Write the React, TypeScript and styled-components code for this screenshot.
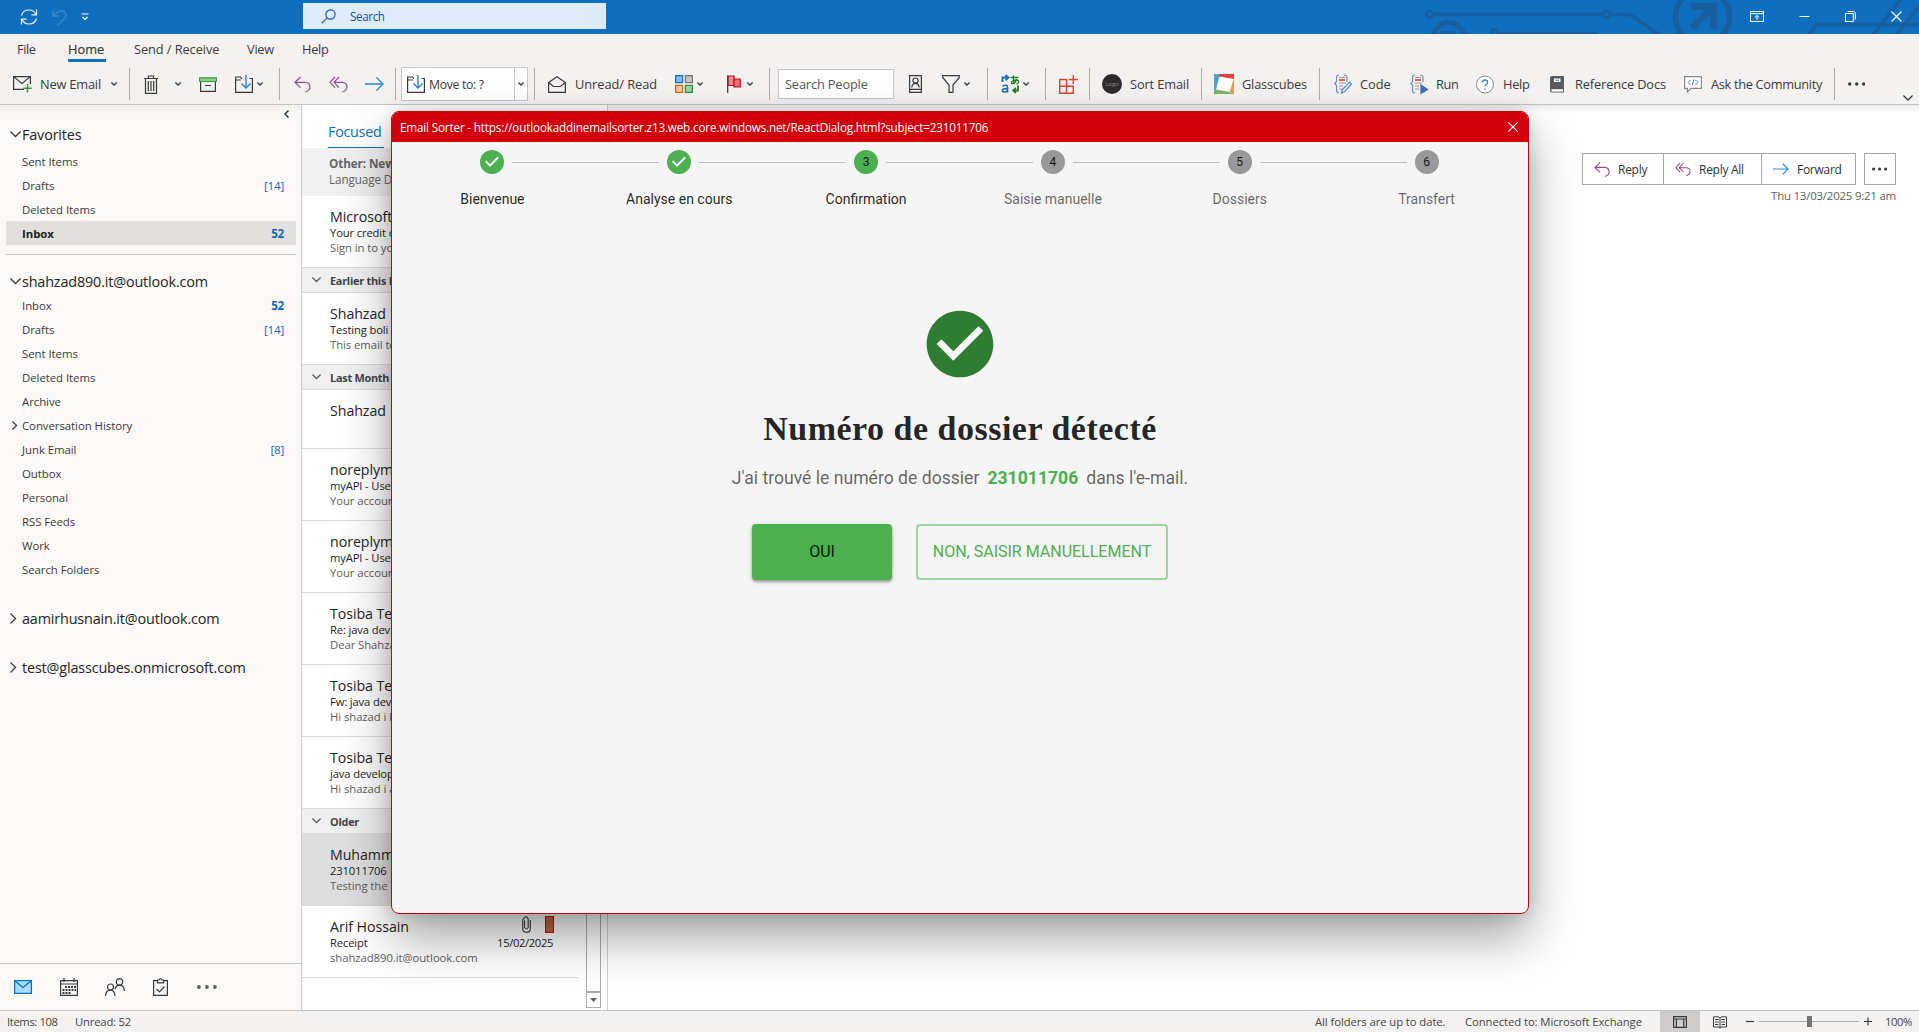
import React from "react";
import styled, { createGlobalStyle, css } from "styled-components";

const GlobalStyle = createGlobalStyle`
  *, *::before, *::after { box-sizing: border-box; }
  html, body { margin: 0; padding: 0; overflow: hidden; }
  body { font-family: "Open Sans", "Noto Sans", sans-serif; color: #444; background: #fff; }
  svg { display: block; flex: none; }
`;

/* ---------- frame ---------- */
const Desktop = styled.div`
  position: relative;
  display: grid;
  grid-template-rows: 34px 71px 1fr 22px;
  width: 1919px;
  height: 1032px;
  overflow: hidden;
  white-space: nowrap;
`;

/* ---------- title bar ---------- */
const TitleBar = styled.header`
  position: relative;
  display: flex;
  align-items: center;
  padding-left: 20px;
  background: #106ebe;
  overflow: hidden;
`;
const Circuit = styled.svg`
  position: absolute;
  right: 0;
  top: 0;
`;
const QuickAccess = styled.div`
  display: flex;
  align-items: center;
  gap: 14px;
  width: 283px;
  height: 34px;
`;
const SearchBox = styled.div`
  display: flex;
  align-items: center;
  width: 303px;
  height: 26px;
  padding-left: 18px;
  gap: 14px;
  margin-bottom: 2px;
  background: #deecf9;
  color: #1f4e8c;
  font-size: 11.7px;
  letter-spacing: -0.4px;
`;
const WindowButtons = styled.div`
  position: relative;
  display: flex;
  align-items: center;
  gap: 35px;
  margin-left: auto;
  padding: 0 17px 2px 0;
`;

/* ---------- ribbon ---------- */
const Ribbon = styled.div`
  display: flex;
  flex-direction: column;
  background: #f3f2f1;
  border-bottom: 1px solid #c6c4c2;
  color: #3b3a39;
`;
const Tabs = styled.nav`
  display: flex;
  gap: 28px;
  height: 28px;
  padding-left: 17px;
`;
const Tab = styled.div<{ $w: number; $active?: boolean; $tight?: number }>`
  width: ${(p) => p.$w}px;
  height: 28px;
  padding-top: 5px;
  line-height: 20px;
  font-size: 12.8px;
  letter-spacing: ${(p) => p.$tight ?? -0.25}px;
  ${(p) =>
    p.$active &&
    css`
      border-bottom: 3px solid #106ebe;
      -webkit-text-stroke: 0.2px;
    `}
`;
const Tools = styled.div`
  display: flex;
  align-items: center;
  height: 42px;
  padding-top: 2px;
`;
const Slot = styled.div<{ $l: number; $w: number }>`
  flex: none;
  display: flex;
  align-items: center;
  margin-left: ${(p) => p.$l}px;
  width: ${(p) => p.$w}px;
`;
const ToolLabel = styled(Slot)<{ $tight?: number }>`
  font-size: 12.8px;
  letter-spacing: ${(p) => p.$tight ?? -0.18}px;
  line-height: 20px;
`;
const Separator = styled.div<{ $l: number }>`
  flex: none;
  width: 1px;
  height: 32px;
  margin-left: ${(p) => p.$l}px;
  background: #aeacaa;
`;
const Combo = styled.div`
  flex: none;
  display: flex;
  align-items: center;
  width: 127px;
  height: 34px;
  margin-left: 5px;
  padding-left: 5px;
  background: #fff;
  border: 1px solid #c8c6c4;
  font-size: 12.3px;
  letter-spacing: -0.35px;
`;
const ComboText = styled.span`
  flex: 1;
  padding-left: 4px;
`;
const ComboDrop = styled.span`
  display: flex;
  align-items: center;
  justify-content: center;
  width: 13px;
  height: 32px;
  border-left: 1px solid #c8c6c4;
`;
const PeopleBox = styled.div`
  flex: none;
  width: 116px;
  height: 30px;
  margin-left: 8px;
  padding-left: 6px;
  line-height: 28px;
  background: #fff;
  border: 1px solid #c8c6c4;
  font-size: 12.8px;
  letter-spacing: -0.15px;
  color: #555;
`;
const LogoDot = styled.div`
  width: 20px;
  height: 20px;
  border-radius: 50%;
  background: #2f2a2a;
  color: #8b8585;
  font-size: 6px;
  line-height: 20px;
  text-align: center;
`;
const Collapse = styled.div`
  align-self: flex-end;
  margin-left: auto;
  padding: 0 6px 3px 0;
`;

/* ---------- folder pane ---------- */
const Body = styled.main`
  display: grid;
  grid-template-columns: 301px 307px 1fr;
  min-height: 0;
  background: #fff;
`;
const FolderPane = styled.aside`
  display: flex;
  flex-direction: column;
  background: linear-gradient(#efeeed, #faf9f8 8px);
`;
const PaneToggle = styled.div`
  display: flex;
  justify-content: flex-end;
  height: 17px;
  padding: 5px 12px 0 0;
`;
const Account = styled.div<{ $top?: number }>`
  display: grid;
  grid-template-columns: 22px 1fr;
  align-items: center;
  height: 24px;
  margin-top: ${(p) => p.$top ?? 0}px;
  font-size: 14.4px;
  letter-spacing: -0.16px;
  color: #252423;
  & svg { margin-left: 10px; }
`;
const Favorites = styled.div`
  padding-top: 3px;
`;
const FolderRow = styled.div<{ $selected?: boolean }>`
  display: grid;
  grid-template-columns: 16px 1fr auto;
  align-items: center;
  height: 24px;
  margin: 0 5px 0 6px;
  padding-right: 12px;
  font-size: 11.4px;
  letter-spacing: -0.05px;
  color: #3b3a39;
  & svg { margin-left: 6px; }
  ${(p) =>
    p.$selected &&
    css`
      background: #e1e0df;
      color: #201f1e;
      font-weight: 700;
    `}
`;
const Count = styled.span<{ $bold?: boolean }>`
  color: #1566b0;
  font-weight: ${(p) => (p.$bold ? 700 : 400)};
  font-size: 11.6px;
  letter-spacing: -0.2px;
`;
const PaneRule = styled.hr`
  width: 290px;
  height: 1px;
  margin: 9px 0 0 6px;
  border: 0;
  background: #cccac8;
`;
const Modules = styled.div`
  display: flex;
  align-items: center;
  height: 47px;
  margin-top: auto;
  border-top: 1px solid #cccac8;
`;

/* ---------- message list ---------- */
const ListPane = styled.section`
  display: grid;
  grid-template-columns: 276px 1fr;
  border-left: 1px solid #cccac8;
  border-right: 1px solid #d0cecc;
`;
const Messages = styled.div`
  display: flex;
  flex-direction: column;
  overflow: hidden;
`;
const FocusTabs = styled.div`
  flex: none;
  height: 43px;
  padding: 16px 0 0 26px;
`;
const FocusTab = styled.div`
  width: 56px;
  height: 27px;
  line-height: 22px;
  border-bottom: 1px solid #106ebe;
  color: #106ebe;
  font-size: 14.4px;
  letter-spacing: -0.3px;
`;
const OtherBand = styled.div`
  flex: none;
  height: 48px;
  padding: 7px 0 0 27px;
  background: #f0f0f0;
  color: #666;
  font-size: 11.7px;
  line-height: 16px;
  letter-spacing: -0.1px;
`;
const Message = styled.article<{ $selected?: boolean; $h?: number }>`
  flex: none;
  display: flex;
  flex-direction: column;
  height: ${(p) => p.$h ?? 72}px;
  padding: 10px 25px 0 28px;
  border-bottom: 1px solid #dcdbda;
  background: ${(p) => (p.$selected ? "#dedede" : "#fff")};
`;
const Line = styled.div`
  display: flex;
  justify-content: space-between;
`;
const Sender = styled(Line)`
  height: 20px;
  line-height: 21px;
  font-size: 14.2px;
  letter-spacing: -0.05px;
  color: #252423;
`;
const Subject = styled(Line)`
  height: 15px;
  line-height: 13px;
  font-size: 11.2px;
  letter-spacing: -0.12px;
  color: #201f1e;
`;
const Preview = styled(Line)`
  height: 15px;
  line-height: 14px;
  font-size: 11.3px;
  letter-spacing: -0.06px;
  color: #605e5c;
`;
const Received = styled.span`
  letter-spacing: -0.35px;
`;
const Markers = styled.span`
  display: flex;
  align-items: center;
  gap: 14px;
  margin: -4px -1px 0 0;
`;
const Flag = styled.i`
  width: 9px;
  height: 17px;
  background: #b9683c;
  border: 1px solid #c00d0d;
`;
const GroupHead = styled.div`
  flex: none;
  display: grid;
  grid-template-columns: 28px 1fr;
  align-items: center;
  height: 25px;
  background: #f0f0f0;
  border-bottom: 1px solid #dcdbda;
  color: #444;
  font-size: 10.9px;
  font-weight: 700;
  letter-spacing: -0.25px;
  & svg { margin-left: 10px; }
`;
const ScrollColumn = styled.div`
  display: flex;
  flex-direction: column;
  align-items: flex-start;
  padding: 9px 0 2px 8px;
`;
const Track = styled.div`
  flex: 1;
  width: 15px;
  border: 1px solid #ababab;
`;
const TrackButton = styled.div`
  display: flex;
  align-items: center;
  justify-content: center;
  width: 15px;
  height: 16px;
  border: 1px solid #ababab;
`;

/* ---------- reading pane ---------- */
const Reading = styled.section`
  display: flex;
  flex-direction: column;
  align-items: flex-end;
  padding: 48px 23px 0 0;
  background: linear-gradient(#ececec, #fff 7px);
`;
const Actions = styled.div`
  display: flex;
  color: #323130;
  font-size: 12px;
  letter-spacing: -0.28px;
`;
const Action = styled.button<{ $w: number; $solo?: boolean }>`
  display: flex;
  align-items: center;
  justify-content: ${(p) => (p.$solo ? "center" : "flex-start")};
  gap: 8px;
  width: ${(p) => p.$w}px;
  height: 32px;
  margin-left: ${(p) => (p.$solo ? 8 : -1)}px;
  padding: 0 0 0 ${(p) => (p.$solo ? 0 : 11)}px;
  border: 1px solid #a9a7a5;
  background: #fff;
  color: inherit;
  font: inherit;
  letter-spacing: inherit;
  & svg { width: 16px; }
`;
const Stamp = styled.time`
  margin-top: 3px;
  line-height: 16px;
  font-size: 11.5px;
  letter-spacing: -0.24px;
  color: #605e5c;
`;

/* ---------- status bar ---------- */
const Status = styled.footer`
  display: flex;
  align-items: center;
  padding: 0 7px;
  background: #f3f2f1;
  border-top: 1px solid #c6c4c2;
  font-size: 11.3px;
  color: #444;
`;
const StatusText = styled.span<{ $l?: number; $w: number; $tight?: number }>`
  width: ${(p) => p.$w}px;
  margin: 0 0 1px ${(p) => p.$l ?? 0}px;
  letter-spacing: ${(p) => p.$tight ?? -0.08}px;
`;
const StatusRight = styled.div`
  display: flex;
  align-items: center;
  margin-left: auto;
`;
const ViewButton = styled.div`
  display: flex;
  align-items: center;
  justify-content: center;
  width: 40px;
  height: 21px;
  margin: 0 13px 0 18px;
  background: #cdcccb;
`;
const Zoom = styled.div`
  display: flex;
  align-items: center;
  gap: 5px;
  margin: 0 13px 0 19px;
`;
const Slider = styled.div`
  display: flex;
  align-items: center;
  justify-content: center;
  width: 100px;
  height: 11px;
  background: linear-gradient(#aeacaa, #aeacaa) center / 100% 1px no-repeat;
`;
const Thumb = styled.i`
  width: 5px;
  height: 11px;
  background: #767472;
`;

/* ---------- add-in dialog ---------- */
const Dialog = styled.div`
  position: absolute;
  left: 391px;
  top: 111px;
  width: 1138px;
  height: 803px;
  border-radius: 8px;
  box-shadow: 0 0 16px rgba(0, 0, 0, 0.14), 0 24px 50px rgba(0, 0, 0, 0.36);
`;
const DialogFrame = styled.div`
  display: flex;
  flex-direction: column;
  height: 803px;
  overflow: hidden;
  border: 1px solid #c4000e;
  border-radius: 8px;
  background: #f5f5f5;
  font-family: Roboto, sans-serif;
`;
const DialogBar = styled.div`
  flex: none;
  display: flex;
  align-items: center;
  justify-content: space-between;
  height: 30px;
  padding: 0 10px 1px 8px;
  background: #d1000c;
  color: #fff;
  font-family: "Open Sans", sans-serif;
  font-size: 11.7px;
  letter-spacing: -0.165px;
`;
const Stepper = styled.ol`
  display: grid;
  grid-template-columns: repeat(6, 1fr);
  margin: 8px 8px 0 7px;
  padding: 0;
  list-style: none;
`;
const Step = styled.li<{ $on: boolean }>`
  display: flex;
  flex-direction: column;
  align-items: center;
  gap: 15px;
  font-size: 14px;
  line-height: 20px;
  color: ${(p) => (p.$on ? "rgba(0,0,0,0.87)" : "rgba(0,0,0,0.6)")};
`;
const StepTop = styled.div`
  display: grid;
  grid-template-columns: 1fr 24px 1fr;
  align-items: center;
  gap: 8px;
  width: 100%;
`;
const Connector = styled.span<{ $hidden: boolean }>`
  height: 1px;
  background: ${(p) => (p.$hidden ? "transparent" : "#bdbdbd")};
`;
const Bullet = styled.span<{ $on: boolean }>`
  display: flex;
  align-items: center;
  justify-content: center;
  width: 24px;
  height: 24px;
  border-radius: 50%;
  background: ${(p) => (p.$on ? "#4caf50" : "#989898")};
  color: rgba(0, 0, 0, 0.87);
  font-size: 12px;
`;
const Result = styled.div`
  display: flex;
  flex-direction: column;
  align-items: center;
  padding-top: 95px;
`;
const Title = styled.h4`
  margin: 24px 0 0;
  font: 700 34px/42px "Liberation Serif", serif;
  letter-spacing: 0.5px;
  color: rgba(0, 0, 0, 0.87);
`;
const Sentence = styled.p`
  display: flex;
  gap: 8px;
  margin: 14px 0 0;
  font-size: 17.6px;
  line-height: 28px;
  color: rgba(0, 0, 0, 0.6);
`;
const FileNumber = styled.strong`
  font-weight: 700;
  color: #4caf50;
`;
const Buttons = styled.div`
  display: flex;
  gap: 24px;
  margin-top: 32px;
`;
const Choice = styled.button<{ $primary?: boolean }>`
  width: ${(p) => (p.$primary ? 140 : 252)}px;
  height: 56px;
  padding: 0 0 2px;
  border-radius: 4px;
  font: 400 16px Roboto, sans-serif;
  ${(p) =>
    p.$primary
      ? css`
          border: 0;
          background: #4caf50;
          color: rgba(0, 0, 0, 0.87);
          box-shadow: 0 2px 3px rgba(0, 0, 0, 0.32), 0 1px 5px rgba(0, 0, 0, 0.12);
        `
      : css`
          border: 2px solid rgba(76, 175, 80, 0.5);
          background: transparent;
          color: #4caf50;
        `}
`;

/* ---------- icons ---------- */
const Svg = ({ w, h, s = "#3b3a39", sw = 1.2, children }: { w: number; h: number; s?: string; sw?: number; children: React.ReactNode }) => (
  <svg width={w} height={h} viewBox={`0 0 ${w} ${h}`} fill="none" stroke={s} strokeWidth={sw} overflow="visible">
    {children}
  </svg>
);
const Chevron = ({ w = 6, c = "#3b3a39", sw = 1.3 }: { w?: number; c?: string; sw?: number }) => (
  <Svg w={w} h={w / 2 + 1} s={c} sw={sw}><path d={`M.4 .5 L${w / 2} ${w / 2} L${w - 0.4} .5`} /></Svg>
);
const ChevronRight = ({ h = 10 }: { h?: number }) => (
  <Svg w={h / 2 + 1} h={h} sw={1.3}><path d={`M.5 .5 L${h / 2} ${h / 2} L.5 ${h - 0.5}`} /></Svg>
);
const ReplyIcon = () => (
  <Svg w={17} h={17} s="#8f4f86"><path d="M6.5 1 L1 6.3 L6.5 11.6 M1 6.3 H11 Q16 6.5 16 11 Q16 14.5 11.5 16" /></Svg>
);
const ReplyAllIcon = () => (
  <Svg w={19} h={17} s="#8f4f86"><path d="M6 1 L1 6.3 L6 11.6 M10 1 L5 6.3 L10 11.6 M5 6.3 H13 Q18 6.5 18 11 Q18 14.5 13.5 16" /></Svg>
);
const ForwardIcon = () => (
  <Svg w={19} h={14} s="#2b88d8" sw={1.3}><path d="M0 7 H18 M11.5 .5 L18 7 L11.5 13.5" /></Svg>
);
const MoveIcon = () => (
  <Svg w={18} h={19}>
    <path d="M7 3.5 H6.5 L5.5 2 H.6 V17.4 H17.4 V3.5 H14.5 M.6 5 H6" />
    <path d="M11 0 V13 M6.5 8.5 L11 13 L15.5 8.5" stroke="#2b7fd0" strokeWidth="1.4" />
  </Svg>
);
const Dots = ({ c = "#3b3a39", r = 1.5, gap = 6 }: { c?: string; r?: number; gap?: number }) => (
  <svg width={gap * 2 + 2 * r} height={4}>
    {[0, 1, 2].map((i) => <circle key={i} cx={r + i * gap} cy={2} r={r} fill={c} />)}
  </svg>
);
const CodePage = ({ children }: { children: React.ReactNode }) => (
  <Svg w={18} h={20} s="#6b8fb5">
    <path d="M5 1 Q2.5 1 2.5 4 V7.5 L.8 9.5 L2.5 11.5 V16 Q2.5 19 5 19 M10 1 Q13 1 13 4 V8" />
    <path d="M5 3.5 H11 M5 9 H12 M5 12 H9 M5 15 H9" stroke="#999" />
    <path d="M5 6 H11" stroke="#e0402f" strokeWidth="1.6" />
    {children}
  </Svg>
);

const STEPS = ["Bienvenue", "Analyse en cours", "Confirmation", "Saisie manuelle", "Dossiers", "Transfert"];
const FAVORITES: [string, string?][] = [["Sent Items"], ["Drafts", "[14]"], ["Deleted Items"], ["Inbox", "52"]];
const FOLDERS: [string, string?][] = [
  ["Inbox", "52"], ["Drafts", "[14]"], ["Sent Items"], ["Deleted Items"], ["Archive"], ["Conversation History"],
  ["Junk Email", "[8]"], ["Outbox"], ["Personal"], ["RSS Feeds"], ["Work"], ["Search Folders"],
];

const Folder = ({ name, count, selected }: { name: string; count?: string; selected?: boolean }) => (
  <FolderRow $selected={selected}>
    <span>{name === "Conversation History" && <ChevronRight h={9} />}</span>
    <span>{name}</span>
    {count && <Count $bold={count === "52"}>{count}</Count>}
  </FolderRow>
);
const Mail = ({ from, subject, preview, selected, h }: { from: string; subject?: string; preview?: string; selected?: boolean; h?: number }) => (
  <Message $selected={selected} $h={h}>
    <Sender>{from}</Sender>
    <Subject>{subject}</Subject>
    <Preview>{preview}</Preview>
  </Message>
);
const Group = ({ name }: { name: string }) => (
  <GroupHead><Chevron w={9} c="#605e5c" /><span>{name}</span></GroupHead>
);

export default function App() {
  return (
    <>
      <GlobalStyle />
      <Desktop>
        <TitleBar>
          <Circuit width="519" height="34" fill="none" stroke="#185f9f" strokeWidth="4">
            <circle cx="29.5" cy="14.5" r="3.5" strokeWidth="2.5" />
            <path d="M33 14.5 H203 M210 14.5 H230 L260 35" strokeWidth="3.5" />
            <circle cx="206.5" cy="14.5" r="3.5" strokeWidth="2.5" />
            <circle cx="48.7" cy="38" r="15.5" strokeWidth="5" />
            <path d="M40 33 H56" />
            <circle cx="95" cy="33" r="3.5" strokeWidth="2.5" />
            <path d="M99 33.5 H198" strokeWidth="3" />
            <circle cx="302.5" cy="17" r="27" strokeWidth="5.5" />
            <path d="M291 6.5 H317 M313.5 3 V29 M314 6 L292 28" strokeWidth="7" />
            <path d="M408 36 L416 24.5 H519 M473 35 L501 -1 M496 35 L522 3" strokeWidth="3.5" />
          </Circuit>
          <QuickAccess>
            <Svg w={18} h={18} s="#e6f1fb" sw={1.2}>
              <path d="M1.5 7.5 Q3 2 9 2 Q14 2 16 6.5 M16.5 1.5 V6.8 H11.5 M16.5 10.5 Q15 16 9 16 Q4 16 2 11.5 M1.5 16.5 V11.2 H6.5" />
            </Svg>
            <Svg w={15} h={17} s="#3c8ad0" sw={1.3}><path d="M1 1 V7 H7 M1 7 Q8 0 12 2.5 Q16 6 12 10 L6 16" /></Svg>
            <Svg w={8} h={8} s="#fff" sw={1.2}><path d="M.5 1 H7.5 M1.5 4 L4 6.5 L6.5 4" /></Svg>
          </QuickAccess>
          <SearchBox>
            <Svg w={15} h={15} s="#1f5a9c"><circle cx="9.5" cy="5.5" r="4.6" /><path d="M6.2 8.8 L.6 14.4" /></Svg>
            <span>Search</span>
          </SearchBox>
          <WindowButtons>
            <Svg w={14} h={11} s="#fff" sw={1}><path d="M.5 .5 H13.5 V10.5 H.5 Z M.5 2.7 H13.5 M7 9 V4.5 M4.8 6.6 L7 4.5 L9.2 6.6" /></Svg>
            <Svg w={11} h={11} s="#fff" sw={1}><path d="M.5 5.5 H10.5" /></Svg>
            <Svg w={11} h={11} s="#fff" sw={1}><path d="M.5 2.5 H8.3 V10.5 H.5 Z M2.5 .5 H8.5 Q10.3 .5 10.3 2.5 V8.5" /></Svg>
            <Svg w={11} h={11} s="#fff" sw={1.1}><path d="M.5 .5 L10.5 10.5 M10.5 .5 L.5 10.5" /></Svg>
          </WindowButtons>
        </TitleBar>

        <Ribbon>
          <Tabs>
            <Tab $w={23} $tight={-0.45}>File</Tab>
            <Tab $w={38} $active $tight={0}>Home</Tab>
            <Tab $w={85} $tight={-0.08}>Send / Receive</Tab>
            <Tab $w={27}>View</Tab>
            <Tab $w={27}>Help</Tab>
          </Tabs>
          <Tools>
            <Slot $l={13} $w={19}>
              <Svg w={19} h={18}>
                <path d="M11 14.4 H.6 V1.6 H17.4 V9 M.6 1.6 L9 8.5 L17.4 1.6" />
                <path d="M14.5 9 V17.5 M10.2 13.2 H18.8" stroke="#389b44" strokeWidth="1.5" />
              </Svg>
            </Slot>
            <ToolLabel $l={8} $w={71}>New Email</ToolLabel>
            <Slot $l={0} $w={18}><Chevron /></Slot>
            <Separator $l={0} />
            <Slot $l={14} $w={14}>
              <Svg w={14} h={19}><path d="M0 3.5 H14 M4.5 3.5 V1 H9.5 V3.5 M1.5 3.5 V18.3 H12.5 V3.5 M4.3 6 V16 M7 6 V16 M9.7 6 V16" /></Svg>
            </Slot>
            <Slot $l={17} $w={6}><Chevron /></Slot>
            <Slot $l={18} $w={18}>
              <Svg w={18} h={15}>
                <path d="M1.6 5 V14.4 H16.4 V5 M6 8.5 H12" />
                <path d="M.6 .8 H17.4 V4.5 H.6 Z" fill="#8fcf95" stroke="#389b44" />
              </Svg>
            </Slot>
            <Slot $l={18} $w={22}><MoveIcon /></Slot>
            <Slot $l={0} $w={22}><Chevron /></Slot>
            <Separator $l={0} />
            <Slot $l={14} $w={17}><ReplyIcon /></Slot>
            <Slot $l={18} $w={19}><ReplyAllIcon /></Slot>
            <Slot $l={17} $w={19}><ForwardIcon /></Slot>
            <Separator $l={11} />
            <Combo>
              <MoveIcon />
              <ComboText>Move to: ?</ComboText>
              <ComboDrop><Chevron /></ComboDrop>
            </Combo>
            <Separator $l={6} />
            <Slot $l={13} $w={18}>
              <Svg w={18} h={17}><path d="M.6 6.5 L9 .7 L17.4 6.5 V16.4 H.6 Z M.6 6.5 L5.5 10.5 H12.5 L17.4 6.5" /></Svg>
            </Slot>
            <ToolLabel $l={9} $w={100} $tight={-0.05}>Unread/ Read</ToolLabel>
            <Slot $l={0} $w={22}>
              <Svg w={18} h={18}>
                <rect x=".6" y=".6" width="7" height="7" fill="#7fb9ec" stroke="#106ebe" />
                <rect x="10.4" y=".6" width="7" height="7" fill="#c8c6c4" stroke="#767472" />
                <rect x=".6" y="10.4" width="7" height="7" fill="#f4c493" stroke="#c26a1c" />
                <rect x="10.4" y="10.4" width="7" height="7" fill="#9bd49f" stroke="#2f8f3b" />
              </Svg>
            </Slot>
            <Slot $l={0} $w={30}><Chevron /></Slot>
            <Slot $l={0} $w={20}>
              <Svg w={14} h={18} s="#c50f1f">
                <path d="M1 1 H7 V10.5 H1 Z" fill="#ee8a92" /><path d="M7 4 H13.3 V12 H7 Z" fill="#e5727c" />
                <path d="M.7 .5 V18" stroke="#3b3a39" />
              </Svg>
            </Slot>
            <Slot $l={0} $w={21}><Chevron /></Slot>
            <Separator $l={1} />
            <PeopleBox>Search People</PeopleBox>
            <Slot $l={15} $w={13}>
              <Svg w={13} h={18}>
                <path d="M.6 .6 H12.4 V17.4 H.6 Z M.6 14.3 H12.4" /><circle cx="6.5" cy="5.6" r="2.6" />
                <path d="M2.8 12.5 Q3.2 8.4 6.5 8.4 Q9.8 8.4 10.2 12.5" />
              </Svg>
            </Slot>
            <Slot $l={20} $w={22}><Svg w={18} h={18}><path d="M.7 .7 H17.3 V2.5 L11 10 V17.4 H7 V10 L.7 2.5 Z" /></Svg></Slot>
            <Slot $l={0} $w={23}><Chevron /></Slot>
            <Separator $l={0} />
            <Slot $l={13} $w={22}>
              <Svg w={19} h={18} s="#106ebe" sw={2}>
                <path d="M1.5 7 V2.5 H7 M4.5 0 L7.5 2.6 L4.5 5.2" strokeWidth="1.8" />
                <path d="M1.5 11 Q6.5 9 6.5 12 V17.5 M6.5 13.5 Q1.2 13.5 1.4 15.8 Q2.5 18 6.5 16" strokeWidth="1.6" />
                <path d="M17 10.5 V15.5 H12.5 M15 12.8 L12.2 15.5 L15 18" stroke="#257d2c" strokeWidth="1.8" />
                <path d="M9.5 2.5 H17.5 M12.5 .3 Q12 6 13.5 9 M16 4 Q14 9 10.8 8.5 Q9.5 6 14.5 5 Q18.5 5 17.5 7.5 Q17 8.7 15.5 9" stroke="#257d2c" strokeWidth="1.3" />
              </Svg>
            </Slot>
            <Slot $l={0} $w={22}><Chevron /></Slot>
            <Separator $l={0} />
            <Slot $l={13} $w={19}>
              <Svg w={19} h={19} s="#e0402f" sw={1.4}><path d="M.7 4.5 H7.5 V18.3 H.7 Z M.7 11.3 H14.3 V18.3 H7.5 M14.3 0 V9 M9.8 4.5 H18.8" /></Svg>
            </Slot>
            <Separator $l={11} />
            <Slot $l={12} $w={20}><LogoDot>Logo</LogoDot></Slot>
            <ToolLabel $l={8} $w={71} $tight={-0.13}>Sort Email</ToolLabel>
            <Separator $l={0} />
            <Slot $l={12} $w={20}>
              <svg width="20" height="20" viewBox="0 0 20 20">
                <path d="M0 0 H7 L3 20 H0 Z" fill="#4aa6cf" /><path d="M5 0 H20 V5 L5 3 Z" fill="#e23f35" />
                <path d="M20 4 V20 H15 Z" fill="#d9a05a" /><path d="M0 20 L1 15 L16 17 V20 Z" fill="#7cb660" />
                <path d="M5.5 2.5 L19 5 L15.5 18 L2 15.5 Z" fill="#fff" />
              </svg>
            </Slot>
            <ToolLabel $l={8} $w={77} $tight={-0.2}>Glasscubes</ToolLabel>
            <Separator $l={0} />
            <Slot $l={14} $w={18}>
              <CodePage><path d="M7.5 19 L8.5 15.5 L15.5 8 L17.5 10 L10.5 17.8 Z" fill="#e8f1fa" stroke="#4f86bd" /></CodePage>
            </Slot>
            <ToolLabel $l={8} $w={50} $tight={0}>Code</ToolLabel>
            <Slot $l={0} $w={18}>
              <CodePage><path d="M11 11 L17.5 15.5 L11 19.5 Z" fill="#3e6fae" stroke="#3e6fae" /></CodePage>
            </Slot>
            <ToolLabel $l={8} $w={40} $tight={-0.4}>Run</ToolLabel>
            <Slot $l={0} $w={18}>
              <Svg w={18} h={19} s="#8a8886" sw={1}>
                <circle cx="9" cy="9.5" r="8.5" fill="#fff" />
                <path d="M6.3 7.4 Q6.5 5 9 5 Q11.6 5 11.6 7.3 Q11.6 8.8 10 9.7 Q9 10.4 9 11.6 M9 13.2 V14.6" stroke="#3d84c6" strokeWidth="1.4" />
              </Svg>
            </Slot>
            <ToolLabel $l={9} $w={47} $tight={-0.28}>Help</ToolLabel>
            <Slot $l={0} $w={14}>
              <svg width="14" height="17" viewBox="0 0 14 17">
                <path d="M2 0 H14 V16.5 H1.5 Q0 16.5 0 14.5 V2 Q0 0 2 0 Z" fill="#5b5959" />
                <path d="M4 2.5 H10.5 V6 H4 Z" fill="#fff" /><path d="M5.5 4.2 H9" stroke="#2b7fd0" />
                <path d="M1.5 13.2 H13 V15.6 H1.5 Z" fill="#fff" />
              </svg>
            </Slot>
            <ToolLabel $l={11} $w={109} $tight={-0.13}>Reference Docs</ToolLabel>
            <Slot $l={0} $w={18}>
              <Svg w={18} h={17} s="#8a8886" sw={1.2}>
                <path d="M.6 .6 H17.4 V12.4 H7 L3.5 16 V12.4 H.6 Z" fill="#fff" />
                <path d="M6.5 4 L4 6.5 L6.5 9 M11.5 4 L14 6.5 L11.5 9 M9.8 3.5 L8.2 9.5" stroke="#3d84c6" strokeWidth="1" />
              </Svg>
            </Slot>
            <ToolLabel $l={9} $w={123} $tight={-0.32}>Ask the Community</ToolLabel>
            <Separator $l={0} />
            <Slot $l={13} $w={18}><Dots r={1.7} gap={7} /></Slot>
            <Collapse><Chevron w={10} /></Collapse>
          </Tools>
        </Ribbon>

        <Body>
          <FolderPane>
            <PaneToggle>
              <Svg w={5} h={8} sw={1.6}><path d="M4.5 .5 L1 4 L4.5 7.5" /></Svg>
            </PaneToggle>
            <Account><Chevron w={11} /><span>Favorites</span></Account>
            <Favorites>
              {FAVORITES.map(([n, c]) => <Folder key={n} name={n} count={c} selected={n === "Inbox"} />)}
            </Favorites>
            <PaneRule />
            <Account $top={14}><Chevron w={11} /><span>shahzad890.it@outlook.com</span></Account>
            {FOLDERS.map(([n, c]) => <Folder key={n} name={n} count={c} />)}
            <Account $top={25}><ChevronRight h={11} /><span>aamirhusnain.it@outlook.com</span></Account>
            <Account $top={25}><ChevronRight h={11} /><span>test@glasscubes.onmicrosoft.com</span></Account>
            <Modules>
              <Slot $l={14} $w={18}>
                <Svg w={18} h={14} s="#106ebe" sw={1.3}><path d="M.6 .6 H17.4 V13.4 H.6 Z" fill="#a9dcf8" /><path d="M.6 .8 L9 7.5 L17.4 .8" /></Svg>
              </Slot>
              <Slot $l={28} $w={18}>
                <Svg w={18} h={18}>
                  <path d="M.6 2.6 H17.4 V17.4 H.6 Z M.6 6 H17.4 M4 0 V4 M14 0 V4" />
                  <path d="M5 9 H16 M2.5 12 H16 M2.5 15 H11" strokeWidth="1.8" strokeDasharray="2 1" />
                </Svg>
              </Slot>
              <Slot $l={27} $w={20}>
                <Svg w={20} h={18}>
                  <circle cx="5.5" cy="9" r="3" /><path d="M.6 18 Q.8 12.2 5.5 12.2 Q9.5 12.2 10 18" />
                  <circle cx="14.5" cy="3.8" r="3.2" /><path d="M10 11 Q11 7.2 14.5 7.2 Q19 7.2 19.4 13" />
                </Svg>
              </Slot>
              <Slot $l={28} $w={15}>
                <Svg w={15} h={18}><path d="M4.5 2.6 H.6 V17.4 H14.4 V2.6 H10.5 M4.5 4.8 V2 H6 Q7.5 -.6 9 2 H10.5 V4.8 Z M3.5 11 L6.5 14 L11.5 8.5" /></Svg>
              </Slot>
              <Slot $l={29} $w={20}><Dots c="#605e5c" r={1.9} gap={8} /></Slot>
            </Modules>
          </FolderPane>

          <ListPane>
            <Messages>
              <FocusTabs><FocusTab>Focused</FocusTab></FocusTabs>
              <OtherBand><b>Other: New e</b><br />Language D</OtherBand>
              <Mail from="Microsoft" subject="Your credit c" preview="Sign in to yo" />
              <Group name="Earlier this M" />
              <Mail from="Shahzad" subject="Testing boli" preview="This email te" />
              <Group name="Last Month" />
              <Mail from="Shahzad" h={59} />
              <Mail from="noreplym" subject="myAPI - User" preview="Your accoun" />
              <Mail from="noreplym" subject="myAPI - User" preview="Your accoun" />
              <Mail from="Tosiba Te" subject="Re: java dev" preview="Dear Shahza" />
              <Mail from="Tosiba Te" subject="Fw: java dev" preview="Hi shazad i h" />
              <Mail from="Tosiba Te" subject="java develop" preview="Hi shazad i a" />
              <Group name="Older" />
              <Mail from="Muhamm" subject="231011706" preview="Testing the" selected />
              <Message>
                <Sender>
                  Arif Hossain
                  <Markers>
                    <Svg w={9} h={17} s="#444"><path d="M2.6 4.5 V11.5 Q4.5 14.5 6.2 11.5 V3 Q4.5 -1 1.8 2.5 Q.7 3 .7 5 V13 Q1 16.3 4.5 16.3 Q8.2 16.3 8.3 13 V4" /></Svg>
                    <Flag />
                  </Markers>
                </Sender>
                <Subject><span>Receipt</span><Received>15/02/2025</Received></Subject>
                <Preview>shahzad890.it@outlook.com</Preview>
              </Message>
            </Messages>
            <ScrollColumn>
              <Track />
              <TrackButton><svg width="7" height="4"><path d="M0 0 H7 L3.5 4 Z" fill="#605e5c" /></svg></TrackButton>
            </ScrollColumn>
          </ListPane>

          <Reading>
            <Actions>
              <Action $w={82}><ReplyIcon />Reply</Action>
              <Action $w={99}><ReplyAllIcon />Reply All</Action>
              <Action $w={95}><ForwardIcon />Forward</Action>
              <Action $w={32} $solo><Dots gap={6} r={1.6} /></Action>
            </Actions>
            <Stamp>Thu 13/03/2025 9:21 am</Stamp>
          </Reading>
        </Body>

        <Status>
          <StatusText $w={52} $tight={-0.4}>Items: 108</StatusText>
          <StatusText $w={60} $l={16} $tight={-0.2}>Unread: 52</StatusText>
          <StatusRight>
            <StatusText $w={132}>All folders are up to date.</StatusText>
            <StatusText $w={177} $l={18}>Connected to: Microsoft Exchange</StatusText>
            <ViewButton><Svg w={14} h={12}><path d="M.6 .6 H13.4 V11.4 H.6 Z M.6 3 H13.4 M3.4 3 V11.4 M10.8 3 V11.4" /></Svg></ViewButton>
            <Svg w={14} h={12} sw={1}><path d="M.5 .8 H5.5 L7 2 L8.5 .8 H13.5 V11 H8.5 L7 12 L5.5 11 H.5 Z M7 2 V12 M2 3.5 H5.5 M2 6 H5.5 M2 8.5 H5.5 M8.5 3.5 H12 M8.5 6 H12 M8.5 8.5 H12" /></Svg>
            <Zoom>
              <Svg w={8} h={9}><path d="M0 4.5 H8" /></Svg>
              <Slider><Thumb /></Slider>
              <Svg w={8} h={9}><path d="M0 4.5 H8 M4 .5 V8.5" /></Svg>
            </Zoom>
            <StatusText $w={27} $tight={-0.45}>100%</StatusText>
          </StatusRight>
        </Status>

        <Dialog>
          <DialogFrame>
            <DialogBar>
              <span>Email Sorter - https://outlookaddinemailsorter.z13.web.core.windows.net/ReactDialog.html?subject=231011706</span>
              <Svg w={10} h={10} s="#fff" sw={1.1}><path d="M.3 .3 L9.7 9.7 M9.7 .3 L.3 9.7" /></Svg>
            </DialogBar>
            <Stepper>
              {STEPS.map((label, i) => (
                <Step key={label} $on={i < 3}>
                  <StepTop>
                    <Connector $hidden={i === 0} />
                    <Bullet $on={i < 3}>
                      {i < 2 ? (
                        <svg width="24" height="24" viewBox="0 0 24 24"><path d="M10 17l-5-5 1.4-1.4 3.6 3.6 7.6-7.6L19 8z" fill="#f5f5f5" /></svg>
                      ) : (
                        i + 1
                      )}
                    </Bullet>
                    <Connector $hidden={i === STEPS.length - 1} />
                  </StepTop>
                  <span>{label}</span>
                </Step>
              ))}
            </Stepper>
            <Result>
              <svg width="80" height="80" viewBox="0 0 24 24" fill="#2e7d32">
                <path d="M12 2C6.48 2 2 6.48 2 12s4.48 10 10 10 10-4.48 10-10S17.52 2 12 2zm-2 15l-5-5 1.41-1.41L10 14.17l7.59-7.59L19 8l-9 9z" />
              </svg>
              <Title>Numéro de dossier détecté</Title>
              <Sentence>
                <span>J'ai trouvé le numéro de dossier</span>
                <FileNumber>231011706</FileNumber>
                <span>dans l'e-mail.</span>
              </Sentence>
              <Buttons>
                <Choice $primary>OUI</Choice>
                <Choice>NON, SAISIR MANUELLEMENT</Choice>
              </Buttons>
            </Result>
          </DialogFrame>
        </Dialog>
      </Desktop>
    </>
  );
}
